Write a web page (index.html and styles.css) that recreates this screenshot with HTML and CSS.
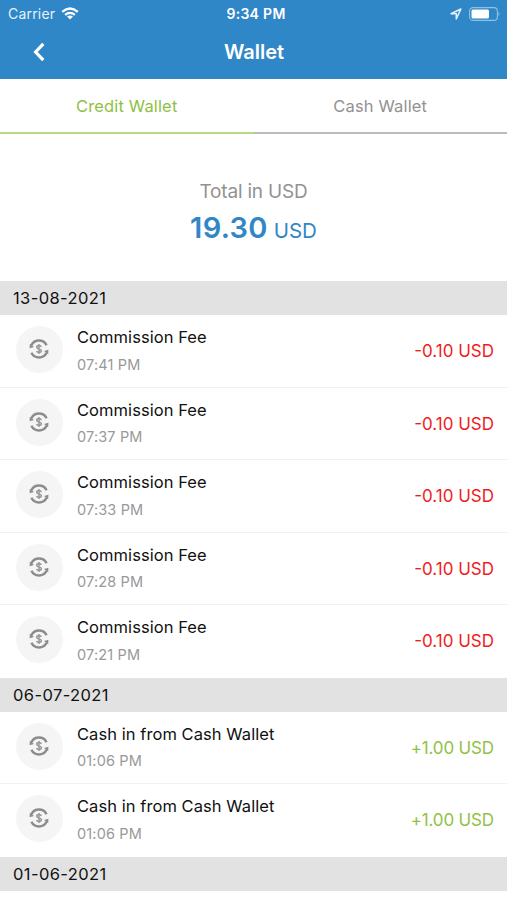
FILE: index.html
```html
<!DOCTYPE html>
<html lang="en">
<head>
<meta charset="utf-8">
<title>Wallet</title>
<link rel="stylesheet" href="styles.css">
</head>
<body>
<svg class="defs" width="0" height="0" aria-hidden="true">
  <symbol id="exchange" viewBox="0 0 20 20">
    <path d="M2.400 6.200A8.500 8.500 0 0 1 17.600 6.200M17.600 13.800A8.500 8.500 0 0 1 2.400 13.800" fill="none" stroke="#8c8c8c" stroke-width="2.500"/>
    <path d="M.8 4.800.6 9.300 5 7.900ZM19.200 15.200 19.400 10.700 15 12.100Z" fill="#8c8c8c"/>
    <path d="M12.300 8C12 6.900 11.100 6.500 10 6.500 8.600 6.500 7.700 7.200 7.700 8.200 7.700 10.500 12.400 9.300 12.400 11.800 12.400 12.900 11.400 13.500 10 13.500 8.800 13.500 7.900 13 7.600 12M10 4.900V15.100" fill="none" stroke="#999" stroke-width="1.500"/>
  </symbol>
</svg>
<header class="top">
  <div class="status">
    <div class="carrier"><span>Carrier</span>
      <svg width="18" height="13" viewBox="0 0 18 13" fill="none" stroke="#fff" stroke-width="2.200"><path d="M1.200 4.800Q9-1.800 16.800 4.800M4.100 7.900Q9 3.900 13.900 7.900"/><path d="M6 9.600Q9 7.300 12 9.600L9 12.600Z" fill="#fff" stroke="none"/></svg>
    </div>
    <div class="clock">9:34 PM</div>
    <div class="indicators">
      <svg width="12" height="12" viewBox="0 0 12 12"><path d="M1 5.700 10.900 1 6.300 10.900V5.700Z" fill="none" stroke="#e6f2fb" stroke-width="1.500" stroke-linejoin="round"/></svg>
      <svg width="31" height="14" viewBox="0 0 31 14"><rect x=".6" y=".6" width="27.800" height="12.800" rx="3.500" fill="none" stroke="#8fc0e6" stroke-width="1.100"/><rect x="2.500" y="2.500" width="17.500" height="9" rx="1.500" fill="#fff"/><path d="M29.500 4.800Q31.500 7 29.500 9.200Z" fill="#8fc0e6"/></svg>
    </div>
  </div>
  <div class="nav">
    <svg class="back" width="12" height="20" viewBox="0 0 12 20"><path d="M10.300 1.900 2.600 10 10.300 18.100" fill="none" stroke="#fff" stroke-width="3.200"/></svg>
    <h1>Wallet</h1>
  </div>
</header>
<nav class="tabs">
  <div class="tab active">Credit Wallet</div>
  <div class="tab">Cash Wallet</div>
</nav>
<section class="total">
  <div class="label">Total in USD</div>
  <div class="sum"><b>19.30</b><span>USD</span></div>
</section>
<main>
  <h2>13-08-2021</h2>
  <div class="row"><div class="badge"><svg><use href="#exchange"/></svg></div><div class="info"><div class="name">Commission Fee</div><div class="time">07:41 PM</div></div><div class="amount out">-0.10 USD</div></div>
  <div class="row"><div class="badge"><svg><use href="#exchange"/></svg></div><div class="info"><div class="name">Commission Fee</div><div class="time">07:37 PM</div></div><div class="amount out">-0.10 USD</div></div>
  <div class="row"><div class="badge"><svg><use href="#exchange"/></svg></div><div class="info"><div class="name">Commission Fee</div><div class="time">07:33 PM</div></div><div class="amount out">-0.10 USD</div></div>
  <div class="row"><div class="badge"><svg><use href="#exchange"/></svg></div><div class="info"><div class="name">Commission Fee</div><div class="time">07:28 PM</div></div><div class="amount out">-0.10 USD</div></div>
  <div class="row last"><div class="badge"><svg><use href="#exchange"/></svg></div><div class="info"><div class="name">Commission Fee</div><div class="time">07:21 PM</div></div><div class="amount out">-0.10 USD</div></div>
  <h2>06-07-2021</h2>
  <div class="row"><div class="badge"><svg><use href="#exchange"/></svg></div><div class="info"><div class="name">Cash in from Cash Wallet</div><div class="time">01:06 PM</div></div><div class="amount in">+1.00 USD</div></div>
  <div class="row last"><div class="badge"><svg><use href="#exchange"/></svg></div><div class="info"><div class="name">Cash in from Cash Wallet</div><div class="time">01:06 PM</div></div><div class="amount in">+1.00 USD</div></div>
  <h2>01-06-2021</h2>
</main>
</body>
</html>
```
FILE: styles.css
```css
* { box-sizing: border-box; }
body { margin: 0; height: 900px; overflow: hidden; background: #fff; color: #111; font-family: Inter, sans-serif; font-size: 16px; }
h1, h2 { margin: 0; }
svg { display: block; }
.defs { position: absolute; }
.top { height: 79px; background: #2f87c7; color: #fff; }
.status { display: grid; grid-template-columns: 1fr auto 1fr; align-items: center; height: 27px; padding: 0 7px 0 8px; font-size: 14px; }
.carrier { display: flex; align-items: center; gap: 6px; color: #e6f2fb; letter-spacing: .2px; }
.clock { margin-left: 4px; font-weight: 600; font-size: 14px; letter-spacing: .3px; }
.indicators { display: flex; justify-content: flex-end; align-items: center; gap: 7px; }
.nav { display: grid; grid-template-columns: 1fr auto 1fr; align-items: center; height: 50px; }
.back { margin-left: 32.5px; }
h1 { grid-column: 2; padding: 0 0 0 1px; font-size: 20px; font-weight: 600; line-height: 24px; }
.tabs { display: flex; height: 55px; }
.tab { flex: 1; padding-top: 1px; border-bottom: 2px solid #b9bcbb; color: #929292; text-align: center; font-size: 16.5px; line-height: 52px; letter-spacing: .15px; }
.tab.active { border-color: #b7d984; color: #8fbf43; }
.total { height: 147px; padding-top: 46px; text-align: center; }
.label { color: #929292; font-size: 19px; line-height: 24px; letter-spacing: -.2px; }
.sum { display: flex; justify-content: center; align-items: baseline; gap: 6px; color: #2f87c7; font-size: 20.500px; line-height: 48px; }
.sum b { font-size: 29px; font-weight: 600; letter-spacing: .3px; }
h2 { height: 34px; padding-left: 13px; background: #e2e2e2; font-size: 16.5px; font-weight: 400; line-height: 34px; letter-spacing: .4px; }
.row { display: flex; height: 72.5px; padding: 0 13px 0 16px; border-bottom: 1.500px solid #f1f1f1; }
.row.last { border-color: transparent; }
.badge { display: grid; place-items: center; width: 47px; height: 47px; margin-top: 11px; border-radius: 50%; background: #f5f5f5; }
.badge svg { width: 20px; height: 20px; margin: 0 1px 1px 0; }
.info { flex: 1; padding: 11.4px 0 0 14px; }
.name { font-size: 16.5px; line-height: 22px; letter-spacing: .06px; }
.time { margin-top: 6.2px; color: #999; font-size: 14.5px; line-height: 20px; letter-spacing: .15px; }
.amount { font-size: 17px; line-height: 72px; }
.out { color: #f01c1c; }
.in { color: #91c147; letter-spacing: -.15px; }
```
